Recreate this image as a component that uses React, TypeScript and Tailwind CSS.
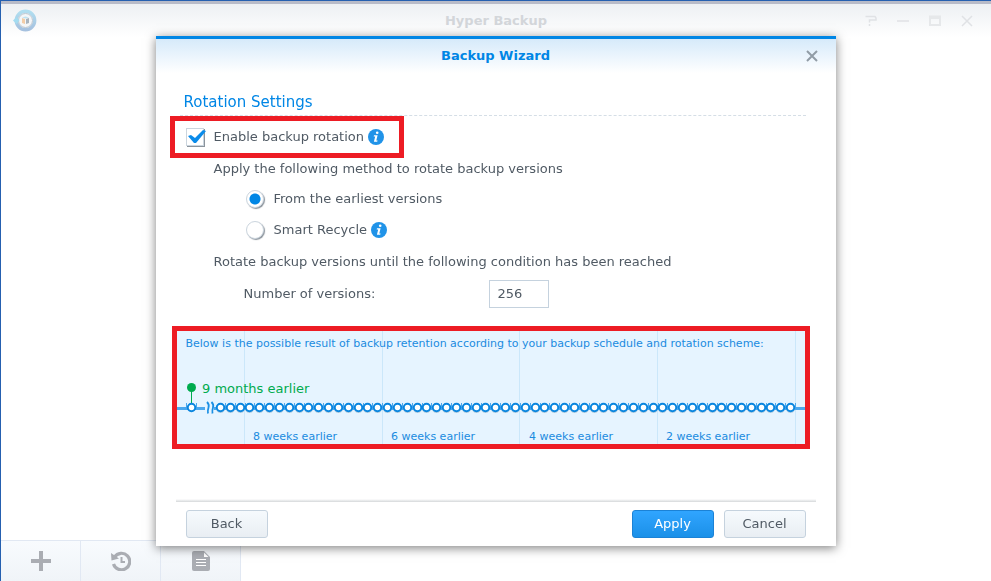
import type { ReactNode } from "react";

const gridLines = [67, 205, 342, 480, 618];

const weekLabels = [
  { x: 76, text: "8 weeks earlier" },
  { x: 214, text: "6 weeks earlier" },
  { x: 352, text: "4 weeks earlier" },
  { x: 489, text: "2 weeks earlier" },
];

const versions = Array.from({ length: 59 }, (_, i) => Math.round(43 + i * 9.83));

function LogoIcon() {
  return (
    <svg width="24" height="24" viewBox="0 0 24 24" aria-hidden="true">
      <defs>
        <linearGradient id="ring" x1="0" y1="0" x2="0" y2="1">
          <stop offset="0" stopColor="#b0def0" />
          <stop offset="1" stopColor="#a6c1df" />
        </linearGradient>
      </defs>
      <circle cx="12.5" cy="11.5" r="9.2" fill="#f4f6f8" stroke="url(#ring)" strokeWidth="3.4" />
      <circle cx="12.5" cy="11.5" r="7" fill="none" stroke="#bcc6cf" strokeWidth="1" />
      <path d="M0 11.5 L3.5 8 L6.5 11.5 L3.5 15 Z" fill="#a4dcf1" />
      <path d="M9 8.5 L12.5 7.5 L16 8.5 L12.5 9.5 Z" fill="#bfe3f2" />
      <path d="M9 9 L12 10 V15 L9 14 Z" fill="#f3cda8" />
      <path d="M13 10 L16 9 V14 L13 15 Z" fill="#a9b4be" />
    </svg>
  );
}

function InfoIcon() {
  return (
    <svg width="16" height="16" viewBox="0 0 16 16" role="img" aria-label="Info">
      <circle cx="8" cy="8" r="8" fill="#2093e8" />
      <circle cx="9.2" cy="3.8" r="1.3" fill="#fff" />
      <path d="M6 6.2 H9.6 L8.3 11.4 H9.6 L9.2 12.8 H5.9 L7.2 7.5 H5.7 Z" fill="#fff" />
    </svg>
  );
}

function WindowButton({ label, children }: { label: string; children: ReactNode }) {
  return (
    <button aria-label={label} className="flex h-8 w-8 items-center justify-center">
      <svg width="12" height="12" viewBox="0 0 12 12" fill="none" stroke="#e0e2e5" strokeWidth="1.5">
        {children}
      </svg>
    </button>
  );
}

function ToolButton({ label, children }: { label: string; children: ReactNode }) {
  return (
    <button
      aria-label={label}
      className="flex h-10 w-20 items-center justify-center border-r border-[#e1e8f3] bg-linear-to-b from-[#f8fbfe] to-[#f0f4f8]"
    >
      <svg width="20" height="20" viewBox="0 0 20 20" fill="#aaadb3">
        {children}
      </svg>
    </button>
  );
}

function Timeline() {
  return (
    <svg className="absolute inset-0" width="100%" height="113" aria-label="Backup retention timeline">
      {gridLines.map((x) => (
        <rect key={x} x={x} y="0" width="1" height="113" fill="#cbe7fa" />
      ))}
      <rect x="0" y="76" width="28" height="3" fill="#4ca8ee" />
      <rect x="37" y="76" width="100%" height="3" fill="#4ca8ee" />
      <path
        d="M30 71 q2.5 2.5 1.5 5.5 t-0.5 6 M34.5 71 q2.5 2.5 1.5 5.5 t-0.5 6"
        fill="none"
        stroke="#1a8fe4"
        strokeWidth="1.8"
      />
      <path d="M9.5 72 v4 M19.5 72 v4" stroke="#4ca8ee" strokeWidth="1" />
      {versions.map((x) => (
        <g key={x}>
          <rect x={x + 5} y="72" width="1" height="5" fill="#4ca8ee" />
          <circle cx={x + 0.5} cy="77.5" r="4.5" fill="#b5cfe2" />
          <circle cx={x + 0.5} cy="76.5" r="3.75" fill="#fff" stroke="#0a86df" strokeWidth="2" />
        </g>
      ))}
      <rect x="14" y="58" width="1" height="15" fill="#00ab4e" />
      <circle cx="14.5" cy="56.5" r="4.5" fill="#00ab4e" />
      <circle cx="14.5" cy="76.5" r="3.75" fill="#fff" stroke="#0a86df" strokeWidth="2" />
      <text x="25" y="62" fontSize="13" fill="#00ab4e">
        9 months earlier
      </text>
      {weekLabels.map((label) => (
        <text key={label.x} x={label.x} y="109" fontSize="11" fill="#1a8be0">
          {label.text}
        </text>
      ))}
    </svg>
  );
}

const radioClass =
  "h-[18px] w-[18px] appearance-none rounded-full border border-[#cbd5de] bg-white shadow-[1px_1px_1px_#8b939b] checked:bg-[radial-gradient(circle,#0086e5_5px,white_6px)]";

const plainButton =
  "h-7 w-[82px] rounded-[3px] border border-[#c5d2de] bg-linear-to-b from-[#f6fafd] to-[#e9eef3] text-[#505a64]";

export default function App() {
  return (
    <div className="flex min-h-screen flex-col overflow-hidden border-t border-l border-[#2560b0] bg-white font-['DejaVu_Sans',Verdana,sans-serif] text-[13px] text-[#505a64]">
      <header className="flex h-9 items-center border-t-3 border-[#b8bbc8] bg-linear-to-b from-[#edf0f3] to-white px-2">
        <div className="flex w-32 pl-1">
          <LogoIcon />
        </div>
        <h1 className="flex-1 text-center font-bold text-[#d3d6da]">Hyper Backup</h1>
        <div className="flex w-32">
          <WindowButton label="Help">
            <path d="M0.5 1.5 H10 L11 3 V5 H4.5 V7.5 M4.5 9 V11" />
          </WindowButton>
          <WindowButton label="Minimize">
            <path d="M0 6 H12" />
          </WindowButton>
          <WindowButton label="Maximize">
            <path d="M1 1.5 H11 V10 H1 Z M1 3 H11" strokeWidth="2" stroke="#e6e8ea" />
          </WindowButton>
          <WindowButton label="Close">
            <path d="M1 1 L11 11 M11 1 L1 11" />
          </WindowButton>
        </div>
      </header>

      <footer className="mt-auto flex">
        <div className="flex border-t border-[#e1e8f3]">
          <ToolButton label="Add">
            <path d="M8 0 H12 V8 H20 V12 H12 V20 H8 V12 H0 V8 H8 Z" />
          </ToolButton>
          <ToolButton label="Restore">
            <path d="M3.5 6 A8.3 8.3 0 1 1 2.5 13" fill="none" stroke="#aaadb3" strokeWidth="3.2" />
            <path d="M0 2 L0.5 9.5 L8 7.5 Z" />
            <path d="M10.5 6 V11 H14" fill="none" stroke="#aaadb3" strokeWidth="2" />
          </ToolButton>
          <ToolButton label="Logs">
            <path d="M3 0 H13 L19 6 V18 Q19 20 17 20 H3 Q1 20 1 18 V2 Q1 0 3 0 Z" />
            <path d="M13 1.5 V6 H17.5 Z" fill="#fff" />
            <path d="M5 8.5 H15 M5 11.5 H15 M5 14.5 H15" stroke="#fff" strokeWidth="1" />
          </ToolButton>
        </div>
      </footer>

      <div className="fixed inset-0 flex items-center justify-center">
        <section
          role="dialog"
          aria-labelledby="wizard-title"
          className="w-[680px] border-t-3 border-[#0086e5] bg-white shadow-[0_2px_10px_rgba(0,0,0,0.5)]"
        >
          <div className="flex h-[34px] items-center bg-linear-to-b from-[#d6eafa] to-white px-4">
            <h2 id="wizard-title" className="flex-1 pl-4 text-center font-bold text-[#0086e5]">
              Backup Wizard
            </h2>
            <button aria-label="Close" className="flex h-4 w-4 items-center justify-center">
              <svg width="12" height="12" viewBox="0 0 12 12" stroke="#919ca6" strokeWidth="2">
                <path d="M1 1 L11 11 M11 1 L1 11" />
              </svg>
            </button>
          </div>

          <div className="pt-4">
            <h3 className="mr-[30px] ml-6 border-b border-dashed border-[#d5dee6] pl-1 text-[15px] leading-[26px] text-[#0086e5]">
              Rotation Settings
            </h3>

            <div className="ml-[14px] flex h-[42px] w-[234px] items-center border-5 border-[#ed1c24] pt-px pl-[11px]">
              <label className="flex items-center gap-[10px]">
                <span className="relative flex">
                  <input
                    type="checkbox"
                    defaultChecked
                    className="peer h-[18px] w-[18px] appearance-none border border-[#cbd5de] bg-white shadow-[1px_1px_0_#8b939b]"
                  />
                  <svg
                    className="pointer-events-none absolute top-0 left-0 hidden peer-checked:block"
                    width="20"
                    height="18"
                    viewBox="0 0 20 18"
                    fill="#0a8bea"
                  >
                    <path d="M2 8 L5 7 L9 10 L17 2 L20 3 L10 15 H8 Z" />
                  </svg>
                </span>
                Enable backup rotation
              </label>
              <span className="ml-1">
                <InfoIcon />
              </span>
            </div>

            <p className="ml-[58px] leading-[22px]">Apply the following method to rotate backup versions</p>

            <div className="mt-1 ml-[90px]">
              <label className="flex h-[31px] items-center gap-[10px]">
                <input type="radio" name="method" defaultChecked className={radioClass} />
                From the earliest versions
              </label>
              <div className="flex h-[31px] items-center gap-1">
                <label className="flex items-center gap-[10px]">
                  <input type="radio" name="method" className={radioClass} />
                  Smart Recycle
                </label>
                <InfoIcon />
              </div>
            </div>

            <p className="ml-[58px] leading-8">
              Rotate backup versions until the following condition has been reached
            </p>

            <div className="mt-[2px] ml-[88px] flex items-center">
              <label htmlFor="versions" className="w-[245px]">
                Number of versions:
              </label>
              <input
                id="versions"
                defaultValue="256"
                className="h-7 w-[60px] border border-[#c5d2de] bg-white px-2"
              />
            </div>

            <div className="relative mt-[18px] mr-[26px] ml-4 h-[123px] border-5 border-[#ed1c24] bg-[#e6f4ff]">
              <Timeline />
              <p className="relative pt-1 pl-[9px] text-[11px] leading-[18px] text-[#1a8be0]">
                Below is the possible result of backup retention according to your backup schedule and rotation scheme:
              </p>
            </div>
          </div>

          <div className="mx-5 mt-[50px] h-[3px] bg-linear-to-b from-white to-[#d5d8da]" />
          <div className="flex gap-[10px] px-[30px] py-2">
            <button className={plainButton}>Back</button>
            <button className="ml-auto h-7 w-[82px] rounded-[3px] border border-[#1b82d6] bg-linear-to-b from-[#30a5ff] to-[#1a90e8] text-white">
              Apply
            </button>
            <button className={plainButton}>Cancel</button>
          </div>
        </section>
      </div>
    </div>
  );
}
